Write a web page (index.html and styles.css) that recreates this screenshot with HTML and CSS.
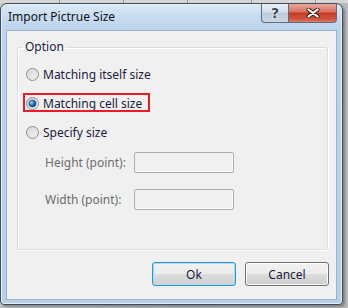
FILE: index.html
```html
<!DOCTYPE html>
<html lang="en">
<head>
    <meta charset="UTF-8">
    <meta name="viewport" content="width=device-width, initial-scale=1.0">
    <title>Import Pictrue Size</title>
    <link rel="stylesheet" href="styles.css">
</head>
<body>
    <div class="window">
        <div class="titlebar">
            <span class="title">Import Pictrue Size</span>
            <div class="caption-btns">
                <span class="cap-btn help">?</span>
                <span class="cap-btn close">
                    <svg width="14" height="10" viewBox="0 0 14 10">
                        <path d="M2.5 1.5 L11.5 8.5 M11.5 1.5 L2.5 8.5" stroke="#4b2620" stroke-width="4.2" stroke-linecap="round"/>
                        <path d="M2.5 1.5 L11.5 8.5 M11.5 1.5 L2.5 8.5" stroke="#ffffff" stroke-width="2.2" stroke-linecap="round"/>
                    </svg>
                </span>
            </div>
        </div>

        <div class="client">
            <fieldset class="group">
                <legend>Option</legend>

                <label class="opt">
                    <svg class="radio" width="13" height="13" viewBox="0 0 13 13">
                        <defs>
                            <linearGradient id="radioFill" x1="0" y1="0" x2="1" y2="1">
                                <stop offset="0" stop-color="#cfcfcf"/>
                                <stop offset="1" stop-color="#fbfbfb"/>
                            </linearGradient>
                            <radialGradient id="dotFill" cx="0.35" cy="0.35" r="0.7">
                                <stop offset="0" stop-color="#8fd8fb"/>
                                <stop offset="0.5" stop-color="#2a7fc0"/>
                                <stop offset="1" stop-color="#123a5c"/>
                            </radialGradient>
                        </defs>
                        <circle cx="6.5" cy="6.5" r="6" fill="url(#radioFill)" stroke="#8c8c8c"/>
                        <circle cx="6.5" cy="6.5" r="4.5" fill="none" stroke="#e2e2e2"/>
                    </svg>
                    Matching itself size
                </label>

                <label class="opt marked">
                    <svg class="radio" width="13" height="13" viewBox="0 0 13 13">
                        <circle cx="6.5" cy="6.5" r="6" fill="url(#radioFill)" stroke="#8c8c8c"/>
                        <circle cx="6.5" cy="6.5" r="3.6" fill="url(#dotFill)" stroke="#1c3f5e" stroke-width="0.6"/>
                    </svg>
                    Matching cell size
                </label>

                <label class="opt">
                    <svg class="radio" width="13" height="13" viewBox="0 0 13 13">
                        <circle cx="6.5" cy="6.5" r="6" fill="url(#radioFill)" stroke="#8c8c8c"/>
                        <circle cx="6.5" cy="6.5" r="4.5" fill="none" stroke="#e2e2e2"/>
                    </svg>
                    Specify size
                </label>

                <div class="field first">
                    <span class="field-label">Height (point):</span>
                    <span class="field-box"></span>
                </div>
                <div class="field">
                    <span class="field-label">Width (point):</span>
                    <span class="field-box"></span>
                </div>
            </fieldset>

            <div class="actions">
                <button class="btn default">Ok</button>
                <button class="btn">Cancel</button>
            </div>
        </div>
    </div>
</body>
</html>
```

FILE: styles.css
```css
body {
    margin: 0;
    width: 348px;
    height: 308px;
    overflow: hidden;
    font-family: "Noto Sans", "Open Sans", sans-serif;
    font-size: 12px;
    color: #1b1b3c;
    background:
        repeating-linear-gradient(to right, #d6d6d6 0, #d6d6d6 59px, #9c9c9c 59px, #9c9c9c 60px, #d6d6d6 60px, #d6d6d6 64px) 0 0 / 100% 3px no-repeat,
        linear-gradient(to right, #c8c8c8, #bcbcbc);
    padding-top: 3px;
    box-sizing: border-box;
}
.window {
    width: 343px;
    height: 302px;
    box-sizing: border-box;
    border: 1px solid #3f4c5a;
    border-radius: 7px 7px 4px 4px;
    padding: 0 5px 4px;
    background: linear-gradient(to bottom, #dbe9f7 0, #c6dbf0 14px, #bcd4ed 26px, #b7d0ea 100%);
    box-shadow: 2px 2px 3px rgba(0, 0, 0, 0.35), inset 0 0 0 1px #e4eef9;
    display: flex;
    flex-direction: column;
}
.titlebar {
    height: 26px;
    display: flex;
    justify-content: space-between;
    align-items: flex-start;
}
.title {
    padding: 5px 0 0 2px;
    line-height: 16px;
    color: #111;
}
.caption-btns {
    display: flex;
}
.cap-btn {
    height: 18px;
    border: 1px solid #5d6d7e;
    border-top: none;
    display: flex;
    align-items: center;
    justify-content: center;
}
.help {
    width: 26px;
    border-radius: 0 0 0 4px;
    border-right: none;
    background: linear-gradient(to bottom, #e6edf5 0, #d3dfea 45%, #bccbda 50%, #c9d7e5 100%);
    font: bold 14px "DejaVu Sans", sans-serif;
    color: #3a4654;
    text-shadow: 0 0 1px #fff, 0 0 1px #fff, 0 0 2px #fff;
}
.close {
    width: 47px;
    border-radius: 0 0 4px 0;
    background: linear-gradient(to bottom, #e9a99c 0, #d7705f 45%, #c43a24 50%, #d1553f 85%, #e27d66 100%);
}
.client {
    flex: 1;
    background: #f0f0f0;
    border: 1px solid #9fb3c8;
    display: flex;
    flex-direction: column;
}
.group {
    margin: 8px 8px 0 10px;
    padding: 0 0 39px 5px;
    border: 1px solid #d5dfe5;
    border-radius: 3px;
    box-shadow: inset 1px 1px #fff, 1px 1px #fff;
    display: flex;
    flex-direction: column;
    gap: 10px;
    min-width: 0;
}
.group legend {
    padding: 0 2px;
    line-height: 16px;
    color: #1b1b3c;
}
.opt {
    width: 127px;
    height: 19px;
    box-sizing: border-box;
    border: 2px solid transparent;
    padding: 2px 0 0 1px;
    display: flex;
    align-items: center;
    gap: 4px;
    line-height: 15px;
    white-space: nowrap;
}
.opt:first-of-type {
    margin-top: 9px;
}
.opt.marked {
    border-color: #ea1c2a;
    overflow: hidden;
}
.radio {
    flex: none;
}
.field {
    display: flex;
    align-items: center;
    height: 21px;
    padding-left: 22px;
    margin-top: 6px;
}
.field.first {
    margin-top: 1px;
}
.field-label {
    width: 89px;
    color: #6d6d6d;
}
.field-box {
    width: 100px;
    height: 21px;
    box-sizing: border-box;
    border: 1px solid #adadad;
    border-radius: 2px;
    background: #f0f0f0;
    box-shadow: inset -1px -1px #fafafa;
}
.actions {
    display: flex;
    justify-content: flex-end;
    gap: 9px;
    margin-top: 12px;
    padding-right: 7px;
}
.btn {
    width: 84px;
    height: 24px;
    border: 1px solid #707070;
    border-radius: 3px;
    background: linear-gradient(to bottom, #f2f2f2 0, #ebebeb 50%, #dddddd 50%, #cfcfcf 100%);
    box-shadow: inset 0 0 0 1px #fbfbfb;
    font: inherit;
    color: #1b1b3c;
    padding: 0;
}
.btn.default {
    border-color: #3c8fc6;
    box-shadow: inset 0 0 0 1px #9fe0fb;
}
```
